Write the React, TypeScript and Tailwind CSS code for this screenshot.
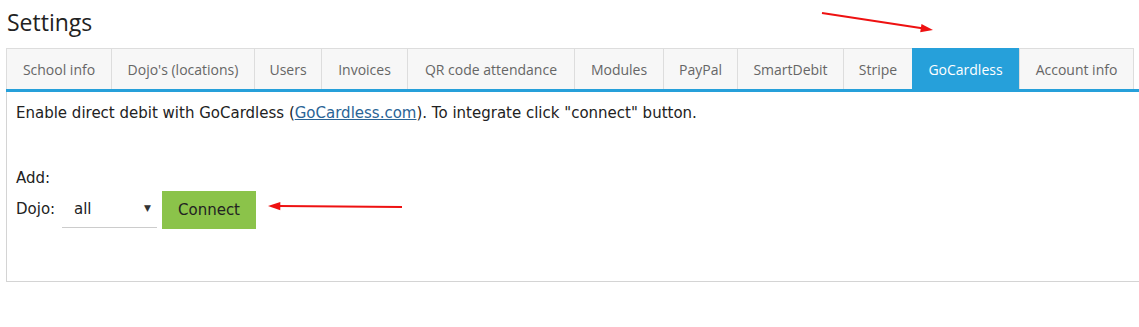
const tabs = [
  { label: "School info", w: "w-[105px]" },
  { label: "Dojo's (locations)", w: "w-[143px]" },
  { label: "Users", w: "w-[67px]" },
  { label: "Invoices", w: "w-[86px]" },
  { label: "QR code attendance", w: "w-[167px]" },
  { label: "Modules", w: "w-[89px]" },
  { label: "PayPal", w: "w-[74px]" },
  { label: "SmartDebit", w: "w-[106px]" },
  { label: "Stripe", w: "w-[69px]" },
  { label: "GoCardless", w: "w-[107px]", active: true },
  { label: "Account info", w: "w-[115px]" },
];

function Arrow({ x1, y1, x2, y2 }: { x1: number; y1: number; x2: number; y2: number }) {
  const a = Math.atan2(y2 - y1, x2 - x1);
  const len = 13;
  const spread = 0.33;
  const p1 = [x2 - len * Math.cos(a - spread), y2 - len * Math.sin(a - spread)];
  const p2 = [x2 - len * Math.cos(a + spread), y2 - len * Math.sin(a + spread)];
  const bx = x2 - (len - 2) * Math.cos(a);
  const by = y2 - (len - 2) * Math.sin(a);
  return (
    <g>
      <line x1={x1} y1={y1} x2={bx} y2={by} stroke="#ee1111" strokeWidth="2" />
      <polygon points={`${x2},${y2} ${p1[0]},${p1[1]} ${p2[0]},${p2[1]}`} fill="#ee1111" />
    </g>
  );
}

export default function App() {
  return (
    <div className="relative w-[1139px] h-[327px] overflow-hidden bg-white">
      <div className="pl-[6px] pt-[7px]">
        <h1 className="text-[23px] leading-[30px] text-[#222] pl-px" style={{ fontFamily: "'Open Sans', sans-serif" }}>
          Settings
        </h1>
        <div className="mt-[11px] flex" style={{ fontFamily: "'Open Sans', sans-serif" }}>
          {tabs.map((t) =>
            t.active ? (
              <div
                key={t.label}
                className={`${t.w} h-[41px] flex items-center justify-center bg-[#26a0da] text-white text-[14px] border-t border-[#26a0da]`}
              >
                {t.label}
              </div>
            ) : (
              <div
                key={t.label}
                className={`${t.w} h-[41px] flex items-center justify-center bg-[#f7f7f7] text-[#666] text-[14px] border-t border-l border-[#dddddd] last:border-r`}
              >
                {t.label}
              </div>
            )
          )}
        </div>
        <div className="h-[3px] bg-[#26a0da]" />
        <div
          className="h-[190px] border-l border-b border-[#d4d4d4] pl-[9px] pt-[11px] text-[15px] text-[#222]"
          style={{ fontFamily: "Verdana, 'DejaVu Sans', sans-serif" }}
        >
          <p className="leading-[20px]">
            Enable direct debit with GoCardless (
            <a className="text-[#2a6496] underline">GoCardless.com</a>). To integrate click "connect" button.
          </p>
          <p className="mt-[45px] leading-[20px]">Add:</p>
          <div className="mt-[3px] flex items-start">
            <span className="leading-[20px] w-[46px] mt-[8px]">Dojo:</span>
            <div className="w-[95px] h-[37px] border-b border-[#cccccc] flex items-center justify-between pl-[12px] pr-[6px]">
              <span>all</span>
              <span className="text-[9px] text-[#333]">▼</span>
            </div>
            <button className="ml-[5px] w-[94px] h-[38px] bg-[#8bc34a] text-[#222] text-[15px]">Connect</button>
          </div>
        </div>
      </div>
      <svg className="absolute left-0 top-0 pointer-events-none" width="1139" height="327">
        <Arrow x1={822} y1={13} x2={933} y2={30} />
        <Arrow x1={402} y1={207} x2={268} y2={206} />
      </svg>
    </div>
  );
}
